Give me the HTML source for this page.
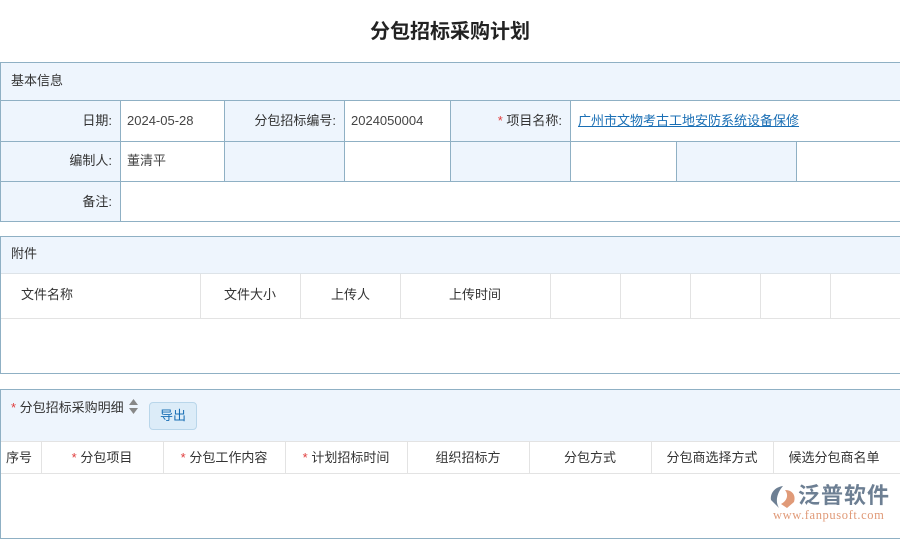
<!DOCTYPE html>
<html><head><meta charset="utf-8"><style>
*{margin:0;padding:0;box-sizing:border-box}
body{width:900px;height:530px;background:#fff;position:relative;overflow:hidden;font-family:"Liberation Sans","Noto Sans CJK SC",sans-serif;font-size:13px;color:#333}
.a{position:absolute}
.b{border:1px solid #8fb0c4}
.bl{background:#eef5fd}
.t{position:absolute;white-space:nowrap;line-height:16px}
.r{color:#e03c3c}
</style></head><body>
<div class="t" style="left:0;width:900px;text-align:center;top:20px;font-size:20px;line-height:24px;font-weight:bold;color:#222">分包招标采购计划</div>

<div class="a b" style="left:0;top:62px;width:901px;height:160px"></div>
<div class="a bl" style="left:1px;top:63px;width:899px;height:37px"></div>
<div class="t" style="left:11px;top:73px">基本信息</div>
<div class="a bl" style="left:1px;top:100px;width:119px;height:121px"></div>
<div class="a bl" style="left:224px;top:100px;width:120px;height:81px"></div>
<div class="a bl" style="left:450px;top:100px;width:120px;height:81px"></div>
<div class="a bl" style="left:676px;top:141px;width:120px;height:40px"></div>
<div class="a" style="left:0;top:100px;width:900px;height:1px;background:#8fb0c4"></div>
<div class="a" style="left:0;top:141px;width:900px;height:1px;background:#8fb0c4"></div>
<div class="a" style="left:0;top:181px;width:900px;height:1px;background:#8fb0c4"></div>
<div class="a" style="left:120px;top:100px;width:1px;height:121px;background:#8fb0c4"></div>
<div class="a" style="left:224px;top:100px;width:1px;height:81px;background:#8fb0c4"></div>
<div class="a" style="left:344px;top:100px;width:1px;height:81px;background:#8fb0c4"></div>
<div class="a" style="left:450px;top:100px;width:1px;height:81px;background:#8fb0c4"></div>
<div class="a" style="left:570px;top:100px;width:1px;height:81px;background:#8fb0c4"></div>
<div class="a" style="left:676px;top:141px;width:1px;height:40px;background:#8fb0c4"></div>
<div class="a" style="left:796px;top:141px;width:1px;height:40px;background:#8fb0c4"></div>
<div class="t" style="right:788px;top:113px">日期:</div>
<div class="t" style="left:127px;top:113px;color:#444">2024-05-28</div>
<div class="t" style="right:564px;top:113px">分包招标编号:</div>
<div class="t" style="left:351px;top:113px;color:#444">2024050004</div>
<div class="t" style="right:338px;top:113px"><span class="r">* </span>项目名称:</div>
<div class="t" style="left:578px;top:113px;color:#1a6fb5;text-decoration:underline">广州市文物考古工地安防系统设备保修</div>
<div class="t" style="right:788px;top:153px">编制人:</div>
<div class="t" style="left:127px;top:153px;color:#444">董清平</div>
<div class="t" style="right:788px;top:194px">备注:</div>

<div class="a b" style="left:0;top:236px;width:901px;height:138px"></div>
<div class="a bl" style="left:1px;top:237px;width:899px;height:36px"></div>
<div class="a" style="left:1px;top:273px;width:899px;height:1px;background:#dde3e8"></div>
<div class="a" style="left:1px;top:318px;width:899px;height:1px;background:#e3e3e3"></div>
<div class="t" style="left:11px;top:246px">附件</div>
<div class="a" style="left:200px;top:274px;width:1px;height:44px;background:#e3e3e3"></div>
<div class="a" style="left:300px;top:274px;width:1px;height:44px;background:#e3e3e3"></div>
<div class="a" style="left:400px;top:274px;width:1px;height:44px;background:#e3e3e3"></div>
<div class="a" style="left:550px;top:274px;width:1px;height:44px;background:#e3e3e3"></div>
<div class="a" style="left:620px;top:274px;width:1px;height:44px;background:#e3e3e3"></div>
<div class="a" style="left:690px;top:274px;width:1px;height:44px;background:#e3e3e3"></div>
<div class="a" style="left:760px;top:274px;width:1px;height:44px;background:#e3e3e3"></div>
<div class="a" style="left:830px;top:274px;width:1px;height:44px;background:#e3e3e3"></div>
<div class="t" style="left:21px;top:287px">文件名称</div>
<div class="t" style="left:224px;top:287px">文件大小</div>
<div class="t" style="left:331px;top:287px">上传人</div>
<div class="t" style="left:449px;top:287px">上传时间</div>

<div class="a b" style="left:0;top:389px;width:901px;height:150px"></div>
<div class="a bl" style="left:1px;top:390px;width:899px;height:51px"></div>
<div class="a" style="left:1px;top:441px;width:899px;height:1px;background:#e3e3e3"></div>
<div class="a" style="left:1px;top:473px;width:899px;height:1px;background:#e3e3e3"></div>
<div class="t" style="left:11px;top:400px"><span class="r">* </span>分包招标采购明细</div>
<svg class="a" style="left:128px;top:398px" width="11" height="18"><path d="M1 7L5.5 1L10 7Z M1 10L5.5 16L10 10Z" fill="#888"/></svg>
<div class="a" style="left:149px;top:402px;width:48px;height:28px;border:1px solid #b9d6ea;border-radius:4px;background:#dcecf8;color:#1a6fb5;text-align:center;line-height:26px">导出</div>
<div class="a" style="left:41px;top:442px;width:1px;height:31px;background:#e3e3e3"></div>
<div class="a" style="left:163px;top:442px;width:1px;height:31px;background:#e3e3e3"></div>
<div class="a" style="left:285px;top:442px;width:1px;height:31px;background:#e3e3e3"></div>
<div class="a" style="left:407px;top:442px;width:1px;height:31px;background:#e3e3e3"></div>
<div class="a" style="left:529px;top:442px;width:1px;height:31px;background:#e3e3e3"></div>
<div class="a" style="left:651px;top:442px;width:1px;height:31px;background:#e3e3e3"></div>
<div class="a" style="left:773px;top:442px;width:1px;height:31px;background:#e3e3e3"></div>
<div class="t" style="left:6px;top:450px">序号</div>
<div class="t" style="left:41px;width:122px;text-align:center;top:450px"><span class="r">* </span>分包项目</div>
<div class="t" style="left:163px;width:122px;text-align:center;top:450px"><span class="r">* </span>分包工作内容</div>
<div class="t" style="left:285px;width:122px;text-align:center;top:450px"><span class="r">* </span>计划招标时间</div>
<div class="t" style="left:407px;width:122px;text-align:center;top:450px">组织招标方</div>
<div class="t" style="left:529px;width:122px;text-align:center;top:450px">分包方式</div>
<div class="t" style="left:651px;width:122px;text-align:center;top:450px">分包商选择方式</div>
<div class="t" style="left:773px;width:122px;text-align:center;top:450px">候选分包商名单</div>

<svg class="a" style="left:769px;top:484px" width="28" height="26"><path d="M14 2 C6 3 1 9 2 16 L10 24 C6 17 8 9 14 2Z" fill="#6d7f93"/><path d="M16 6 C24 6 27 12 25 18 L18 24 L12 20 C18 17 20 11 16 6Z" fill="#e09a78"/></svg>
<div class="t" style="left:798px;top:483px;font-size:22px;line-height:26px;color:#6d7f93;font-weight:bold;letter-spacing:1px">泛普软件</div>
<div class="t" style="left:773px;top:509px;font-size:12.5px;line-height:13px;color:#e09a78;font-family:'Liberation Serif',serif;letter-spacing:0.6px">www.fanpusoft.com</div>
</body></html>
